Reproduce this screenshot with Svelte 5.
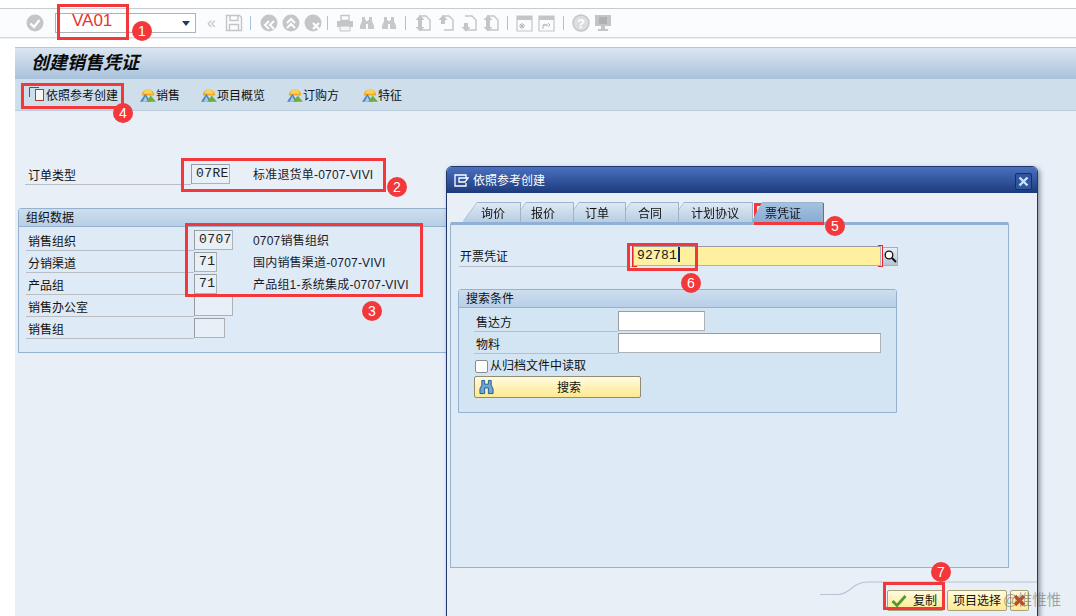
<script>
  const tabs = [
    { t: '询价', w: 57, p: 18 },
    { t: '报价', w: 61, p: 19 },
    { t: '订单', w: 60, p: 20 },
    { t: '合同', w: 61, p: 21 },
    { t: '计划协议', w: 82, p: 21 },
    { t: '票凭证', w: 70, p: 13, on: true }
  ];
  const orgRows = [
    { l: '销售组织', v: '0707', w: 39, d: '0707销售组织' },
    { l: '分销渠道', v: '71', w: 23, d: '国内销售渠道-0707-VIVI' },
    { l: '产品组', v: '71', w: 23, d: '产品组1-系统集成-0707-VIVI' },
    { l: '销售办公室', v: '', w: 39, d: '' },
    { l: '销售组', v: '', w: 31, d: '' }
  ];
  const marks = [
    { n: 1, x: 142, y: 31 },
    { n: 2, x: 397, y: 187 },
    { n: 3, x: 372, y: 311 },
    { n: 4, x: 123, y: 113 },
    { n: 5, x: 835, y: 226 },
    { n: 6, x: 691, y: 283 },
    { n: 7, x: 941, y: 572 }
  ];
  const boxes = [
    { x: 57, y: 4, w: 72, h: 36 },
    { x: 181, y: 158, w: 205, h: 34 },
    { x: 185, y: 223, w: 238, h: 74 },
    { x: 21, y: 83, w: 103, h: 26 },
    { x: 754, y: 203, w: 70, h: 22 },
    { x: 627, y: 243, w: 71, h: 28 },
    { x: 883, y: 582, w: 62, h: 28 }
  ];
  const actions = [
    { t: '销售', m: 22 },
    { t: '项目概览', m: 21 },
    { t: '订购方', m: 22 },
    { t: '特征', m: 23 }
  ];
</script>

{#snippet bino(c)}
  <svg width="16" height="16" viewBox="0 0 16 16"><path d="M3 2h3v3h1v1h2V5h1V2h3v4l2 5v3h-6V9H7v5H1v-3l2-5z" fill={c}/></svg>
{/snippet}
{#snippet doc(kind)}
  <svg width="18" height="18" viewBox="0 0 18 18" fill="none" stroke="#c3c5c7" stroke-width="1.4">
    <path d="M5 2h7l4 4v10H7"/>
    {#if kind !== 'down'}<path d="M6 1 1.500 6h2.500v4h4V6h2.500z" fill="#c3c5c7" stroke="none"/>{/if}
    {#if kind !== 'up'}<path d="M6 17.500 1.500 13h2.500V9h4v4h2.500z" fill="#c3c5c7" stroke="none"/>{/if}
  </svg>
{/snippet}
{#snippet mountain()}
  <svg class="act-ic" width="16" height="16" viewBox="0 0 18 17">
    <path d="M2 9a7 7 0 0 1 14 0z" fill="#f3a81d"/>
    <path d="M4 7a5 5 0 0 1 10 0z" fill="#fbd15a"/>
    <path d="M0 16 6 7l6 9z" fill="#4f87b8"/>
    <path d="M3 16 6 10l3 6z" fill="#a9cbe3"/>
    <path d="M7 16l5-7 6 7z" fill="#6fae3d"/>
  </svg>
{/snippet}

<div class="page">
  <div class="topgap"></div>
  <div class="toolbar">
    <svg class="ok" width="18" height="18" viewBox="0 0 18 18"><circle cx="9" cy="9" r="8.500" fill="#c4c6c8"/><path d="M4.500 9.500 8 13l5.500-7" fill="none" stroke="#fff" stroke-width="2.200"/></svg>
    <div class="cmd"><span class="cmd-text">VA01</span><span class="caret"></span></div>
    <span class="dbl">«</span>
    <svg class="i save" width="18" height="18" viewBox="0 0 18 18" fill="none" stroke="#c3c5c7" stroke-width="1.400"><path d="M1.500 1.500h13l2 2v13h-15z"/><path d="M5 1.500v5h8v-5M4.500 16.500v-6h9v6"/></svg>
    <span class="sep s1"></span>
    <svg class="i b1" width="18" height="18" viewBox="0 0 18 18"><circle cx="9" cy="9" r="8.500" fill="#c4c6c8"/><path d="M9 7 5 11l4 4M14 7l-4 4 4 4" fill="none" stroke="#fff" stroke-width="2"/></svg>
    <svg class="i b2" width="18" height="18" viewBox="0 0 18 18"><circle cx="9" cy="9" r="8.500" fill="#c4c6c8"/><path d="M5 9l4-4 4 4M5 14l4-4 4 4" fill="none" stroke="#fff" stroke-width="2"/></svg>
    <svg class="i b3" width="18" height="18" viewBox="0 0 18 18"><circle cx="9" cy="9" r="8.500" fill="#c4c6c8"/><path d="M9 9l6 6M15 9l-6 6" fill="none" stroke="#fff" stroke-width="2.200"/></svg>
    <span class="sep s2"></span>
    <svg class="i pr" width="18" height="18" viewBox="0 0 18 18"><path d="M5 1.500h8v5H5z" fill="none" stroke="#c3c5c7" stroke-width="1.400"/><path d="M1 7h16v6H1z" fill="#c3c5c7"/><path d="M4 12h10v5H4z" fill="#f4f5f6" stroke="#c3c5c7"/></svg>
    <span class="i fa">{@render bino('#c6c8ca')}</span>
    <span class="i fb">{@render bino('#c6c8ca')}</span>
    <span class="sep s3"></span>
    <span class="i d1">{@render doc('both')}</span>
    <span class="i d2">{@render doc('up')}</span>
    <span class="i d3">{@render doc('down')}</span>
    <span class="i d4">{@render doc('both')}</span>
    <span class="sep s4"></span>
    <svg class="i w1" width="17" height="17" viewBox="0 0 17 17"><path d="M1 1h15v15H1z" fill="none" stroke="#c3c5c7" stroke-width="1.200"/><path d="M1 1h15v4H1z" fill="#c3c5c7"/><path d="M4 9l4 4M8 9l-4 4M6 8v6M3 11h6" stroke="#b4b6b8"/></svg>
    <svg class="i w2" width="17" height="17" viewBox="0 0 17 17"><path d="M1 1h15v15H1z" fill="none" stroke="#c3c5c7" stroke-width="1.200"/><path d="M1 1h15v4H1z" fill="#c3c5c7"/><path d="M5 14v-4h4M5 10l5 0M10 8l2 2-2 2" fill="none" stroke="#b4b6b8"/></svg>
    <span class="sep s5"></span>
    <svg class="i h1" width="18" height="18" viewBox="0 0 18 18"><circle cx="9" cy="9" r="8" fill="#dcdddf" stroke="#c3c5c7" stroke-width="1.400"/><text x="9" y="13.500" text-anchor="middle" class="q">?</text></svg>
    <svg class="i h2" width="18" height="18" viewBox="0 0 18 18"><path d="M1 1h16v11H1z" fill="#c3c5c7"/><path d="M5 3h8v7H5z" fill="#aeb0b2"/><path d="M7 12h4v3h3v2H4v-2h3z" fill="#c3c5c7"/></svg>
  </div>
  <div class="gap"></div>

  <main class="main">
    <div class="title">创建销售凭证</div>
    <div class="actions">
      <div class="act first">
        <svg width="17" height="15" viewBox="0 0 17 15"><path d="M0.500 10V0.500H10" fill="none" stroke="#555"/><rect x="6.500" y="2.500" width="8" height="11" fill="#f7f7f7" stroke="#b23a22"/></svg>
        <span>依照参考创建</span>
      </div>
      {#each actions as a}
        <div class="act" style="margin-left:{a.m}px">{@render mountain()}<span>{a.t}</span></div>
      {/each}
    </div>

    <div class="content">
      <div class="frow order">
        <span class="lbl l-order">订单类型</span>
        <span class="inp w39">07RE</span>
        <span class="desc">标准退货单-0707-VIVI</span>
      </div>
      <section class="group org">
        <h3>组织数据</h3>
        <div class="rows">
          {#each orgRows as r}
            <div class="frow">
              <span class="lbl">{r.l}</span>
              <span class="inp" style="width:{r.w}px">{r.v}</span>
              {#if r.d}<span class="desc" style="margin-left:{59 - r.w}px">{r.d}</span>{/if}
            </div>
          {/each}
        </div>
      </section>
    </div>
  </main>

  <div class="dialog">
    <div class="dtitle">
      <svg width="15" height="13" viewBox="0 0 15 13" fill="none" stroke="#fff" stroke-width="1.300"><path d="M12 4V1H1v11h11V9"/><path d="M5 4h9l-3 4H5z"/></svg>
      <span>依照参考创建</span>
      <span class="close"><svg width="11" height="11" viewBox="0 0 11 11"><path d="M1.500 1.500l8 8M9.500 1.500l-8 8" stroke="#cfe0fa" stroke-width="2.400"/></svg></span>
    </div>
    <div class="dbody">
      <div class="tabs">
        {#each tabs as t, n}
          <div class="tabwrap" class:first={n === 0} class:on={t.on} style="width:{t.w}px;z-index:{t.on ? 9 : 8 - n}">
            <div class="tab" class:on={t.on} style="padding-left:{t.p}px"><span>{t.t}</span></div>
          </div>
        {/each}
      </div>
      <div class="panel">
        <div class="frow bill">
          <span class="lbl l-bill">开票凭证</span>
          <span class="inp req"><span class="val">92781</span><i class="cursor"></i></span>
          <span class="sbtn"><svg width="13" height="13" viewBox="0 0 13 13"><circle cx="5" cy="5" r="3.800" fill="#fff" stroke="#111" stroke-width="1.300"/><path d="M8 8l4 4" stroke="#111" stroke-width="2"/></svg></span>
        </div>
        <section class="group search">
          <h3>搜索条件</h3>
          <div class="frow srow one">
            <span class="lbl l-s">售达方</span>
            <span class="inp white" style="width:87px"></span>
          </div>
          <div class="frow srow">
            <span class="lbl l-s">物料</span>
            <span class="inp white" style="width:263px"></span>
          </div>
          <label class="check"><span class="box"></span><span>从归档文件中读取</span></label>
          <div class="yellow-btn">
            <svg width="15" height="16" viewBox="0 0 16 16"><path d="M3 1h3v4h4V1h3v5l2 4v5h-5V9H6v6H1v-5l2-4z" fill="#6ea6d6" stroke="#1c5a93"/></svg>
            <span>搜索</span>
          </div>
        </section>
      </div>
      <svg class="curve" width="217" height="16" viewBox="0 0 217 16"><path d="M0 13.500h18C30 13.500 32 1 48 1h169" fill="none" stroke="#b6c4d4" stroke-width="1.200"/></svg>
      <div class="foot">
        <div class="fbtn copy">
          <svg width="16" height="13" viewBox="0 0 16 13"><path d="M1.500 7 6 11.500 14.500 2" fill="none" stroke="#4f9a2b" stroke-width="2.800"/></svg>
          <span>复制</span>
        </div>
        <div class="fbtn pick">项目选择</div>
        <div class="fbtn x"><svg width="13" height="13" viewBox="0 0 13 13"><path d="M2 2l9 9M11 2l-9 9" stroke="#c44a22" stroke-width="3.400"/></svg></div>
      </div>
    </div>
  </div>

  {#each boxes as b}
    <div class="redbox" style="left:{b.x}px;top:{b.y}px;width:{b.w}px;height:{b.h}px"></div>
  {/each}
  {#each marks as m}
    <div class="mark" style="left:{m.x - 10}px;top:{m.y - 10}px">{m.n}</div>
  {/each}
  <div class="wm">@惟惟惟</div>
</div>

<style>
  :global(body) { margin: 0; background: #fff; }
  .page {
    position: relative; width: 1076px; height: 616px; overflow: hidden; background: #fff;
    font: 12px/16px "Liberation Sans", "Noto Sans CJK SC", sans-serif; color: #111;
  }
  .topgap { height: 8px; background: #fff; }
  .toolbar {
    height: 30px; display: flex; align-items: center; box-sizing: border-box;
    border-top: 1px solid #c8ccd0; border-bottom: 1px solid #d4d8dd;
    background: #fbfcfd; padding-left: 26px;
  }
  .gap { height: 9px; background: #fff; border-top: 1px solid #eef1f5; box-sizing: border-box; }
  .ok { flex: none; }
  .cmd {
    margin-left: 11px; width: 141px; height: 20px; box-sizing: border-box; flex: none;
    background: #fff; border: 1px solid #aeb2b7; position: relative;
  }
  .cmd-text { position: absolute; left: 16px; top: -2px; font-size: 17px; line-height: 17px; color: #e8352e; }
  .caret { position: absolute; right: 5px; top: 7px; border: 4px solid transparent; border-top: 5px solid #1d3d66; border-bottom: 0; }
  .dbl { margin-left: 11px; width: 10px; color: #c3c5c7; font-size: 16px; line-height: 16px; flex: none; }
  .i { flex: none; display: block; }
  .save { margin-left: 8px; }
  .sep { width: 1px; height: 14px; background: #a9c4de; flex: none; }
  .s1 { margin-left: 7px; }
  .b1 { margin-left: 9px; }
  .b2 { margin-left: 4px; }
  .b3 { margin-left: 4px; }
  .s2 { margin-left: 5px; }
  .pr { margin-left: 8px; }
  .fa { margin-left: 5px; height: 16px; }
  .fb { margin-left: 6px; height: 16px; }
  .s3 { margin-left: 8px; }
  .d1 { margin-left: 8px; height: 18px; }
  .d2 { margin-left: 5px; height: 18px; }
  .d3 { margin-left: 5px; height: 18px; }
  .d4 { margin-left: 4px; height: 18px; }
  .s4 { margin-left: 7px; }
  .w1 { margin-left: 8px; }
  .w2 { margin-left: 5px; }
  .s5 { margin-left: 8px; }
  .h1 { margin-left: 8px; }
  .h2 { margin-left: 4px; }
  .q { font: bold 13px "Liberation Sans", sans-serif; fill: #fff; }

  .main { margin-left: 15px; height: 569px; display: flex; flex-direction: column; }
  .title {
    height: 32px; box-sizing: border-box; padding: 3px 0 0 16px; flex: none;
    background: linear-gradient(#dbe6f1, #a9c2db);
    border-top: 1px solid #b5c7da;
    font-size: 18px; line-height: 24px; font-weight: 700; font-style: italic; color: #0a0a0a;
  }
  .actions {
    height: 32px; flex: none; display: flex; align-items: center; box-sizing: border-box; padding-left: 14px;
    background: #cfdeeb; border-bottom: 1px solid #bccddd;
  }
  .act { display: flex; align-items: center; white-space: nowrap; }
  .act span { padding-top: 2px; }
  .act-ic { flex: none; }
  .content { flex: 1; background: #e8eff7; padding: 52px 0 0 3px; }
  .frow { display: flex; align-items: center; height: 22px; }
  .order { height: 22px; margin-bottom: 23px; }
  .lbl {
    box-sizing: border-box; width: 166px; padding-left: 2px; height: 21px; line-height: 24px;
    border-bottom: 1px solid #b9bec4; margin-left: 8px; flex: none;
  }
  .l-order { margin-left: 7px; padding-left: 3px; }
  .inp {
    box-sizing: border-box; height: 20px; background: #e7eff7; border: 1px solid #aeb2b7; border-top-color: #999da2;
    border-left-color: #999da2; flex: none; font: 13px/18px "Liberation Mono", monospace; padding-left: 4px; letter-spacing: 0.400px;
    color: #222;
  }
  .w39 { width: 39px; }
  .desc { margin-left: 23px; padding-top: 2px; white-space: nowrap; letter-spacing: 0.200px; color: #1a1a2a; }
  .group { border: 1px solid #93b2d0; border-radius: 3px 3px 0 0; box-sizing: border-box; }
  .group h3 {
    margin: 0; font-size: 12px; font-weight: 400; line-height: 18px; height: 17px; padding-left: 7px;
    background: linear-gradient(#cddeee, #b8cfe6); border-bottom: 1px solid #93b2d0;
  }
  .org { width: 440px; height: 145px; background: #deeaf5; }
  .rows { padding-top: 2px; }
  .org .lbl { margin-left: 7px; width: 168px; }

  .dialog {
    position: absolute; left: 446px; top: 166px; width: 592px; height: 470px; box-sizing: border-box;
    border: 1px solid #22386b; border-radius: 6px 6px 0 0; background: #e8eff7;
    box-shadow: 2px 2px 5px rgba(50, 60, 80, 0.55); display: flex; flex-direction: column;
  }
  .dtitle {
    height: 26px; flex: none; display: flex; align-items: center; gap: 4px; padding: 1px 6px 0 7px; color: #fff; box-sizing: border-box;
    background: linear-gradient(#4a70c0, #1c3b7c); border-radius: 5px 5px 0 0; position: relative;
  }
  .close {
    position: absolute; right: 5px; top: 6px; width: 15px; height: 15px; display: flex; align-items: center;
    justify-content: center; background: #2f569e; border: 1px solid #16305f; border-radius: 2px;
  }
  .dbody { flex: 1; position: relative; padding: 10px 28px 0 3px; }
  .tabs { display: flex; height: 19px; padding-left: 13px; }
  .tabwrap {
    position: relative; height: 19px; flex: none; margin-left: -8px;
    filter: drop-shadow(1px 0 0 #9db4cc) drop-shadow(0 -1px 0 #9db4cc);
  }
  .tabwrap.first { margin-left: 0; }
  .tabwrap.on { margin-left: 0; }
  .tab {
    box-sizing: border-box; height: 19px; display: flex; align-items: center; padding-top: 3px;
    background: linear-gradient(#dfe9f3, #b7cde3);
    clip-path: polygon(14px 0, 100% 0, 100% 100%, 0 100%);
  }
  .tab.on { background: linear-gradient(#a5c1df, #88acd4); clip-path: polygon(10px 0, 100% 0, 100% 100%, 0 100%); }
  .panel {
    height: 346px; box-sizing: border-box; background: #deeaf5; border: 1px solid #94b3d1; border-top: 3px solid #90b1d5;
    padding: 20px 0 0 8px; position: relative; border-radius: 2px 2px 0 0;
  }
  .bill { height: 22px; margin-bottom: 22px; }
  .l-bill { margin-left: 0; width: 174px; padding-left: 1px; line-height: 22px; }
  .req {
    width: 248px; height: 20px; background: #fff0a0; position: relative; padding-left: 3px; letter-spacing: 0.200px;
  }
  .req::before, .req::after {
    content: ""; position: absolute; top: -2px; bottom: -2px; width: 4px; border: 1px solid #e3272a;
  }
  .req::before { left: -2px; border-right: 0; }
  .req::after { right: -3px; border-left: 0; }
  .val { color: #1a1a1a; }
  .cursor { display: inline-block; width: 2px; height: 15px; background: #0f2a66; vertical-align: -3px; margin-left: 1px; }
  .sbtn {
    width: 16px; height: 19px; margin-left: 1px; display: flex; align-items: center; justify-content: center;
    background: linear-gradient(#e8eef5, #b7c3d2); border: 1px solid #a4adb8; box-sizing: border-box;
  }
  .search { width: 439px; height: 124px; background: #d3e4f3; margin-left: -1px; }
  .srow { height: 22px; }
  .one { margin-top: 2px; }
  .l-s { width: 144px; margin-left: 15px; padding-left: 2px; }
  .white { background: #fff; }
  .check { display: flex; align-items: center; gap: 2px; margin: 4px 0 0 16px; height: 16px; }
  .box { width: 13px; height: 13px; box-sizing: border-box; background: #fff; border: 1px solid #888d94; border-radius: 2px; }
  .yellow-btn {
    margin: 2px 0 0 15px; width: 167px; height: 22px; box-sizing: border-box; border: 1px solid #8f8c70; border-radius: 2px;
    background: linear-gradient(#fffbe0, #ffe98f); display: flex; align-items: center; position: relative; padding-left: 4px;
  }
  .yellow-btn span { position: absolute; left: 82px; top: 3px; }
  .curve { position: absolute; right: 0; top: 388px; }
  .foot { position: absolute; left: 440px; top: 397px; display: flex; gap: 3px; }
  .fbtn {
    height: 21px; box-sizing: border-box; border: 1px solid #a8a27a; border-radius: 2px; background: linear-gradient(#fffbe0, #ffe98f);
    display: flex; align-items: center; justify-content: center; white-space: nowrap;
  }
  .copy { width: 57px; gap: 6px; justify-content: flex-start; padding-left: 3px; }
  .pick { width: 60px; }
  .x { width: 19px; }

  .redbox { position: absolute; box-sizing: border-box; border: 3px solid #f2383a; }
  .mark {
    position: absolute; width: 20px; height: 20px; border-radius: 50%; background: #f2383a; color: #fff; text-align: center;
    font: 14px/20px "Liberation Sans", sans-serif;
  }
  .wm { position: absolute; left: 1003px; top: 591px; font-size: 14.500px; line-height: 18px; color: rgba(110, 110, 110, 0.6); white-space: nowrap; }
</style>
